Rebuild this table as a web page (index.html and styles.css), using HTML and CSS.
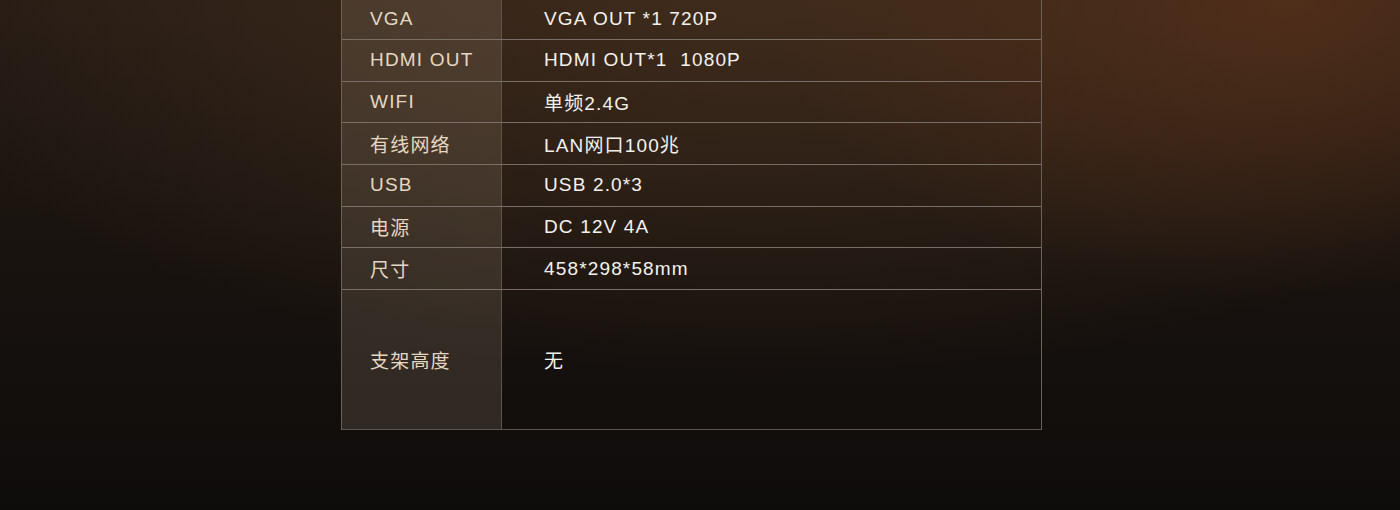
FILE: index.html
```html
<!DOCTYPE html>
<html lang="zh-CN">
<head>
<meta charset="utf-8">
<title>规格参数</title>
<link rel="stylesheet" href="styles.css">
</head>
<body>
<main class="page">
  <div class="spec">
    <div class="row"><div class="key">VGA</div><div class="val">VGA OUT *1 720P</div></div>
    <div class="row"><div class="key">HDMI OUT</div><div class="val">HDMI OUT*1&nbsp; 1080P</div></div>
    <div class="row"><div class="key">WIFI</div><div class="val">单频2.4G</div></div>
    <div class="row"><div class="key">有线网络</div><div class="val">LAN网口100兆</div></div>
    <div class="row"><div class="key">USB</div><div class="val">USB 2.0*3</div></div>
    <div class="row"><div class="key">电源</div><div class="val">DC 12V 4A</div></div>
    <div class="row"><div class="key">尺寸</div><div class="val">458*298*58mm</div></div>
    <div class="row tall"><div class="key">支架高度</div><div class="val">无</div></div>
  </div>
</main>
</body>
</html>
```

FILE: styles.css
```css
html, body {
  margin: 0;
  padding: 0;
  height: 510px;
  overflow: hidden;
}

body {
  font-family: "Liberation Sans", "Noto Sans CJK SC", sans-serif;
  background:
    radial-gradient(ellipse 520px 300px at 1290px 0px, rgba(90, 50, 26, 0.75), rgba(90, 50, 26, 0) 100%),
    radial-gradient(ellipse 900px 420px at 760px -40px, rgba(70, 48, 30, 0.85), rgba(70, 48, 30, 0) 100%),
    linear-gradient(to bottom, #251b14 0%, #17120e 55%, #0e0c0b 100%);
}

.page {
  display: flex;
  padding-left: 341px;
}

.spec {
  width: 699px;
  margin-top: -1.67px;
  border-left: 1px solid #6c625a;
  border-right: 1px solid #6c625a;
  display: flex;
  flex-direction: column;
}

.row {
  display: flex;
  height: 41.667px;
  border-bottom: 1px solid #7a6f66;
  box-sizing: border-box;
}

.row.tall {
  height: 140px;
  border-bottom-color: #5d5650;
}

.key {
  width: 160px;
  flex: none;
  box-sizing: border-box;
  padding-left: 28px;
  display: flex;
  align-items: center;
  background: rgba(160, 140, 120, 0.22);
  border-right: 1px solid #5e544c;
  color: #e6d7c2;
  font-size: 19px;
  letter-spacing: 1.2px;
}

.val {
  flex: 1;
  display: flex;
  align-items: center;
  padding-left: 42px;
  color: #f5f2ee;
  font-size: 19px;
  letter-spacing: 1.15px;
}
```
